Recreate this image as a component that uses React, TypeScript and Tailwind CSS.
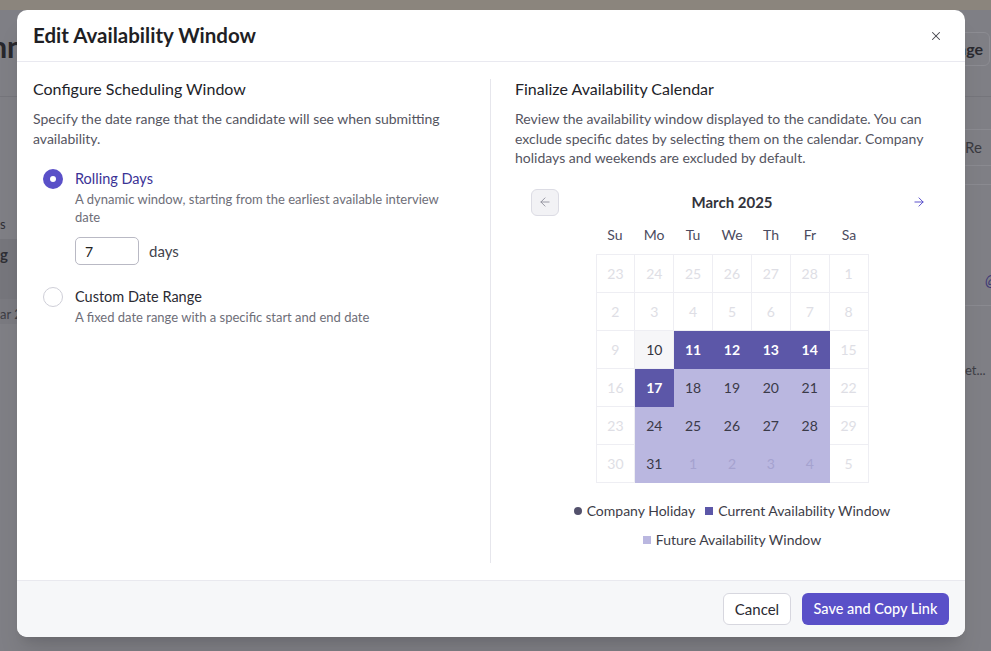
import { X, ArrowLeft, ArrowRight } from "lucide-react";

type Kind = "dim" | "today" | "current" | "future" | "futureOut";

const weeks: [number, Kind][][] = [
  [[23, "dim"], [24, "dim"], [25, "dim"], [26, "dim"], [27, "dim"], [28, "dim"], [1, "dim"]],
  [[2, "dim"], [3, "dim"], [4, "dim"], [5, "dim"], [6, "dim"], [7, "dim"], [8, "dim"]],
  [[9, "dim"], [10, "today"], [11, "current"], [12, "current"], [13, "current"], [14, "current"], [15, "dim"]],
  [[16, "dim"], [17, "current"], [18, "future"], [19, "future"], [20, "future"], [21, "future"], [22, "dim"]],
  [[23, "dim"], [24, "future"], [25, "future"], [26, "future"], [27, "future"], [28, "future"], [29, "dim"]],
  [[30, "dim"], [31, "future"], [1, "futureOut"], [2, "futureOut"], [3, "futureOut"], [4, "futureOut"], [5, "dim"]],
];

const cellStyles: Record<Kind, string> = {
  dim: "border-[#eeeef3] bg-white text-[#dedee5]",
  today: "border-[#eeeef3] bg-[#f6f6f8] text-[#33333d]",
  current: "border-[#5c57a8] bg-[#5c57a8] text-white font-bold",
  future: "border-[#bab7e0] bg-[#bab7e0] text-[#3a3a48]",
  futureOut: "border-[#bab7e0] bg-[#bab7e0] text-[#a5a2cf]",
};

function Calendar() {
  return (
    <div className="mt-[21px] px-4">
      <div className="flex items-center justify-between">
        <button className="flex h-[27px] w-[28px] items-center justify-center rounded-md border border-[#dcdce4] bg-[#f2f2f5] text-[#8b8b99]">
          <ArrowLeft size={14} strokeWidth={1.5} />
        </button>
        <div className="text-[15px] font-bold text-[#33333b]">March 2025</div>
        <button className="flex h-[27px] w-[28px] items-center justify-center text-[#5046c8]">
          <ArrowRight size={14} strokeWidth={1.6} />
        </button>
      </div>

      <div className="mx-auto mt-[9px] w-[273px]">
        <div className="grid grid-cols-7 text-center text-[14px] leading-5 text-[#4b4b60]">
          {["Su", "Mo", "Tu", "We", "Th", "Fr", "Sa"].map((d) => (
            <div key={d}>{d}</div>
          ))}
        </div>
        <div className="mt-[9px] grid grid-cols-7 border-l border-t border-[#eeeef3]">
          {weeks.flat().map(([n, kind], i) => (
            <div
              key={i}
              className={`flex h-[38px] items-center justify-center border-b border-r text-[14px] ${cellStyles[kind]}`}
            >
              {n}
            </div>
          ))}
        </div>
      </div>

      <div className="mt-[18px] flex flex-wrap justify-center gap-x-[10px] gap-y-[9px] text-[14px] leading-5 text-[#3d3d48]">
        <div className="flex items-center gap-[5px]">
          <span className="h-[8px] w-[8px] rounded-full bg-[#53516c]" />
          Company Holiday
        </div>
        <div className="flex items-center gap-[5px]">
          <span className="h-[8px] w-[8px] bg-[#5c57a8]" />
          Current Availability Window
        </div>
        <div className="flex items-center gap-[5px]">
          <span className="h-[8px] w-[8px] bg-[#bab7e0]" />
          Future Availability Window
        </div>
      </div>
    </div>
  );
}

function Radio({ checked }: { checked: boolean }) {
  return checked ? (
    <span className="flex h-[20px] w-[20px] shrink-0 items-center justify-center rounded-full bg-[#5a50c8]">
      <span className="h-[6px] w-[6px] rounded-full bg-white" />
    </span>
  ) : (
    <span className="h-[20px] w-[20px] shrink-0 rounded-full border border-[#cfcfd8] bg-white" />
  );
}

function Background() {
  return (
    <div className="flex h-full flex-col bg-[#7f7f85]">
      <div className="h-[10px] bg-[#8b857d]" />
      <div className="flex h-[87px] items-start justify-between border-b border-[#75757b]">
        <div className="mt-[14px] flex w-[24px] justify-end overflow-hidden">
          <span className="whitespace-nowrap text-[30px] font-bold text-[#27272c]">Plann</span>
        </div>
        <div className="mr-[1px] mt-[22px] flex h-[34px] items-center rounded-md border border-[#8c8c92] px-[6px] text-[16px] font-bold text-[#2a2a30]">
          Manage
        </div>
      </div>
      <div className="flex flex-1">
        <div className="flex w-[20px] flex-col overflow-hidden text-[13px] text-[#2f2f35]">
          <div className="mt-[118px] whitespace-nowrap">s</div>
          <div className="mt-[4px] flex h-[60px] items-start bg-[#76767c] pt-[4px] text-[15px] font-bold">g</div>
          <div className="whitespace-nowrap bg-[#7a7a80] pt-[6px] text-[#3d3d44]">ar 2</div>
        </div>
        <div className="flex-1" />
        <div className="flex w-[26px] flex-col overflow-hidden">
          <div className="mt-[32px] border-y border-[#8a8a90] py-[6px] text-[15px] text-[#3a3a40]">Re</div>
          <div className="mt-[18px] border-b border-[#8a8a90]" />
          <div className="mt-[84px] pl-[20px] text-[15px] italic text-[#3b3575]">@</div>
          <div className="mt-[14px] border-b border-[#8a8a90]" />
          <div className="mt-[55px] text-[13px] text-[#3d3d44]">et...</div>
        </div>
      </div>
    </div>
  );
}

export default function App() {
  return (
    <div className="relative h-[651px] w-[991px] overflow-hidden" style={{ fontFamily: "Lato, 'Open Sans', sans-serif" }}>
      <Background />

      <div className="absolute left-[17px] top-[10px] flex h-[627px] w-[948px] flex-col overflow-hidden rounded-[10px] bg-white shadow-xl">
        {/* Header */}
        <div className="flex h-[52px] shrink-0 items-center justify-between border-b border-[#e9e9f0] px-4">
          <h1 className="text-[20.5px] font-bold text-[#1f1f25]">Edit Availability Window</h1>
          <button className="mr-[6px] text-[#45454d]">
            <X size={14} strokeWidth={1.8} />
          </button>
        </div>

        {/* Body */}
        <div className="flex flex-1 px-4 pb-[17px] pt-[17px]">
          <div className="w-1/2 shrink-0 border-r border-[#e6e6ec] pr-4">
            <h2 className="text-[16px] leading-5 text-[#222228]">Configure Scheduling Window</h2>
            <p className="mt-[10px] text-[14px] leading-5 text-[#55555f]">
              Specify the date range that the candidate will see when submitting availability.
            </p>

            <div className="mt-5 flex gap-3 pl-[10px]">
              <Radio checked />
              <div>
                <div className="text-[14.5px] leading-5 text-[#3b3396]">Rolling Days</div>
                <div className="mt-[1px] max-w-[370px] text-[13px] leading-[18px] text-[#6e6e78]">
                  A dynamic window, starting from the earliest available interview date
                </div>
                <div className="mt-[11px] flex items-center gap-[10px]">
                  <input
                    defaultValue="7"
                    className="h-[28px] w-[64px] rounded-[5px] border border-[#b9b9c4] px-[9px] text-[14px] text-[#222] outline-none"
                  />
                  <span className="text-[15px] text-[#44444d]">days</span>
                </div>
              </div>
            </div>

            <div className="mt-[22px] flex gap-3 pl-[10px]">
              <Radio checked={false} />
              <div>
                <div className="text-[14.5px] leading-5 text-[#2b2b33]">Custom Date Range</div>
                <div className="mt-[1px] text-[13px] leading-[18px] text-[#6e6e78]">
                  A fixed date range with a specific start and end date
                </div>
              </div>
            </div>
          </div>

          <div className="w-1/2 shrink-0 pl-6">
            <h2 className="text-[16px] leading-5 text-[#222228]">Finalize Availability Calendar</h2>
            <p className="mt-[10px] text-[14px] leading-[19.5px] text-[#55555f]">
              Review the availability window displayed to the candidate. You can exclude specific dates by
              selecting them on the calendar. Company holidays and weekends are excluded by default.
            </p>
            <Calendar />
          </div>
        </div>

        {/* Footer */}
        <div className="flex h-[57px] shrink-0 items-center justify-end gap-[11px] border-t border-[#e9e9ef] bg-[#f6f7f9] px-4">
          <button className="h-[32px] w-[68px] rounded-md border border-[#d7d7df] bg-white text-[15px] text-[#2a2a32]">
            Cancel
          </button>
          <button className="h-[32px] w-[147px] rounded-md bg-[#5a50c8] text-[14.5px] font-medium text-white">
            Save and Copy Link
          </button>
        </div>
      </div>
    </div>
  );
}
